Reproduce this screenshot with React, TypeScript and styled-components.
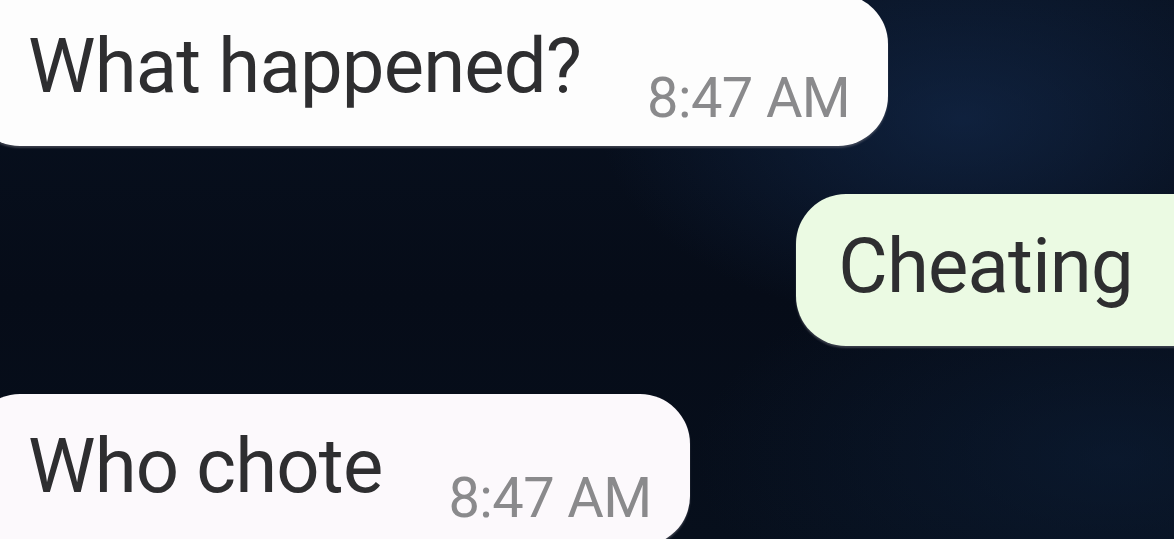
import React from "react";
import styled, { createGlobalStyle } from "styled-components";

const Global = createGlobalStyle`
  html, body { margin: 0; padding: 0; background: #060d1a; }
  * { box-sizing: border-box; }
`;

const Screen = styled.div`
  width: 1174px;
  height: 539px;
  overflow: hidden;
  display: flex;
  flex-direction: column;
  gap: 48px;
  background:
    radial-gradient(ellipse 520px 300px at 82% 22%, rgba(22, 48, 88, 0.55), rgba(22, 48, 88, 0) 70%),
    radial-gradient(ellipse 600px 300px at 95% 85%, rgba(14, 34, 62, 0.5), rgba(14, 34, 62, 0) 70%),
    linear-gradient(180deg, #081120 0%, #060c18 55%, #070f1c 100%);
  font-family: Roboto, "Noto Sans", "Liberation Sans", sans-serif;
`;

const Bubble = styled.div<{ $side: "in" | "out"; $tone: "white" | "pink" | "green" }>`
  flex: none;
  height: 152px;
  display: flex;
  align-items: flex-end;
  border-radius: 50px;
  background: ${(p) =>
    p.$tone === "green" ? "#ebfae3" : p.$tone === "pink" ? "#fcf9fc" : "#fdfdfd"};
  box-shadow: 0 2px 2px rgba(120, 120, 130, 0.45);
  align-self: ${(p) => (p.$side === "in" ? "flex-start" : "flex-end")};
  margin-left: ${(p) => (p.$side === "in" ? "-30px" : "0")};
  margin-right: ${(p) => (p.$side === "out" ? "-240px" : "0")};
  padding: ${(p) => (p.$side === "in" ? "0 38px 20px 58px" : "0 38px 20px 42px")};
  &:first-child {
    margin-top: -6px;
  }
`;

const Message = styled.span`
  align-self: flex-start;
  margin-top: 34px;
  font-size: 76px;
  line-height: 1;
  letter-spacing: -0.8px;
  color: #2e2e30;
  white-space: nowrap;
`;

const Time = styled.span<{ $gap: number }>`
  margin-left: ${(p) => p.$gap}px;
  font-size: 56px;
  line-height: 1;
  letter-spacing: -0.6px;
  color: #8a8a8c;
  white-space: nowrap;
`;

export default function App() {
  return (
    <>
      <Global />
      <Screen>
        <Bubble $side="in" $tone="white">
          <Message>What happened?</Message>
          <Time $gap={66}>8:47 AM</Time>
        </Bubble>
        <Bubble $side="out" $tone="green">
          <Message>Cheating</Message>
          <Time $gap={40}>8:47 AM</Time>
        </Bubble>
        <Bubble $side="in" $tone="pink">
          <Message>Who chote</Message>
          <Time $gap={66}>8:47 AM</Time>
        </Bubble>
      </Screen>
    </>
  );
}
